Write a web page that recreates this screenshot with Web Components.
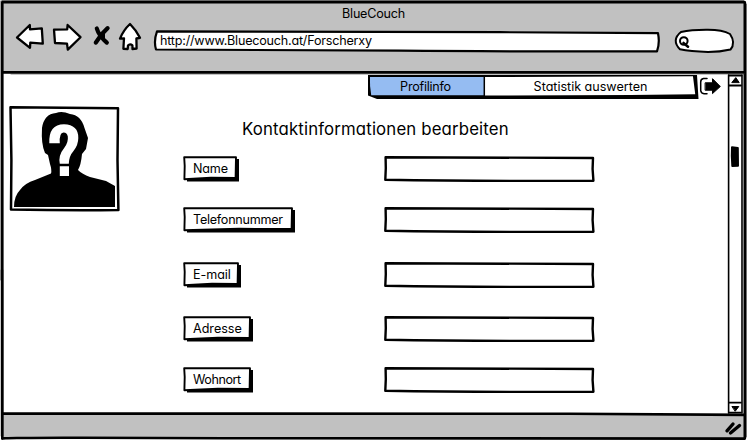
<!DOCTYPE html>
<html lang="de"><head><meta charset="utf-8"><title>BlueCouch</title>
<style>html,body{margin:0;background:#fff;overflow:hidden}body{font:12.6px Inter,"Open Sans",sans-serif;font-feature-settings:"cv11","ss03";color:#000;width:747px;height:441px}</style></head>
<body>
<browser-window>
  <fit-text slot="title" width="62">BlueCouch</fit-text>
  <fit-text slot="url" width="211">http://www.Bluecouch.at/Forscherxy</fit-text>
  <profile-page></profile-page>
</browser-window>
<script>
const base = '<style>*{box-sizing:border-box}svg{display:block;overflow:visible;fill:none;stroke:#000;stroke-width:2.4;stroke-linejoin:round;stroke-linecap:round}</style>';
function define(name, html, init) {
  customElements.define(name, class extends HTMLElement {
    connectedCallback() {
      if (this.shadowRoot) return;
      this.attachShadow({mode: 'open'}).innerHTML = base + (typeof html === 'function' ? html(this) : html);
      if (init) init(this);
    }
  });
}

/* Text whose letter spacing is tuned to a given ink width. */
define('fit-text', '<style>:host{display:inline-block;white-space:nowrap;line-height:16px;padding-top:1px}</style><span><slot></slot></span>', el => {
  const s = el.shadowRoot.querySelector('span');
  const w = +el.getAttribute('width') + .8;
  const n = el.textContent.length;
  s.style.letterSpacing = ((w - s.getBoundingClientRect().width) / n) + 'px';
});

define('nav-icons', `<style>:host{display:block;width:126px;height:28px}svg{fill:#fff;stroke-width:2.3}</style>
<svg width="126" height="28" viewBox="16 23 126 28">
<path d="M17 37.5 29.8 25 30 29.4 41.8 28.3 42.8 43.6 30.3 42.6 30 47.8Z"/>
<path d="M54 29.6 67.2 29.4 67.6 25 80.5 37.2 67.8 49.6 67 43.7 55 43Z"/>
<path d="M96.8 28.5Q99 36 106.8 42.6M107.6 28.2Q101 34 95.8 42.6" stroke-width="4.2" fill="none"/><path d="M99 33.5 105 31.5 105 38.5 99.5 38.5Z" fill="#000" stroke="none"/>
<path d="M130 24 Q136 30 140 37.8L136.4 38.5 136.6 48.5 132.5 49 132.4 45.4Q130 43.3 128 45.6L127.7 49 123.4 48.8 124 38.3 120 38.6Q123.5 30 130 24Z"/>
</svg>`);

define('url-field', `<style>:host{display:grid;width:506px;height:22px}svg,div{grid-area:1/1}div{padding:2px 0 0 6px}svg{fill:#fff;stroke-width:2.2}</style>
<svg width="506" height="22" viewBox="154 30 506 22"><path d="M157 31.4 Q400 31.5 500 32.2T658 33.2 Q660 43 657 51.4 Q500 51.6 400 50.7 T156 49.5 Q153.5 41 157 31.4Z"/></svg><div><slot></slot></div>`);

define('search-field', `<style>:host{display:block;width:60px;height:25px}svg{fill:#fff;stroke-width:2}</style>
<svg width="60" height="25" viewBox="675 29 60 25"><path d="M681 32Q691 29.8 706 29.8 Q722 29.5 730 34 Q736 43 730.5 49.5 Q720 52 708 52 Q690 51.5 680 49.3 Q671 40 681 32Z"/><circle cx="683.8" cy="41" r="3.8"/><path d="M683.5 43 688 46.7" stroke-width="2.6"/></svg>`);

define('browser-window', `<style>
:host{display:grid;grid-template:73px 341px 27px/747px;width:747px;height:441px}
.back{grid-area:1/1/4/2}header{grid-area:1/1;display:grid;grid-template-rows:23px 1fr;z-index:1}
.title{display:flex;justify-content:center;padding-top:5px}
.bar{display:flex;padding-left:16px}nav-icons{margin-right:12px}url-field{margin:7px 15px 0 0}search-field{margin-top:6px}
main{grid-area:2/1;z-index:1}footer{grid-area:3/1;z-index:1;display:flex;justify-content:flex-end;padding:7px 4px 0 0}
</style>
<svg class="back" width="747" height="441"><path fill="#fff" stroke="none" d="M0 0H747V441H0Z"/><path fill="#c1c1c1" stroke="none" d="M3 3H744V72H3ZM3 414H744V438H3Z"/>
<path stroke="#444" stroke-width="1" d="M2 .7H744M1 1V280M746.2 4V437"/>
<path stroke-width="2.6" d="M2.5 2.3H744.8V438.6Q500 439.4 250 438.2T2.3 438.6V2.3M3 72.4Q180 72 744 72.4M3 413.4Q400 412.8 570 413.8T744 414.9"/><path d="M11 73.8H744" stroke="#333" stroke-width="1"/><path d="M2 270V436"/></svg>
<header><div class="title"><slot name="title"></slot></div><div class="bar"><nav-icons></nav-icons><url-field><slot name="url"></slot></url-field><search-field></search-field></div></header>
<main><slot></slot></main>
<footer><svg width="18" height="15" viewBox="725 421 18 15" style="stroke-width:3.4"><path d="M727 430.8 733 424M730.5 433 739.5 425.5"/></svg></footer>`);

define('tab-bar', `<style>:host{display:grid;width:331px;height:25px}svg,nav{grid-area:1/1}nav{display:grid;grid-template-columns:115px 1fr;padding-top:3px}nav span{display:flex;justify-content:center}nav span+span{padding-right:1px}</style>
<svg width="331" height="25" viewBox="368 75 331 25"><path fill="#000" stroke="none" d="M368 75H697L698.5 99H500L377 99 368 95.5Z"/><path fill="#fff" stroke="none" d="M484 77 693 76.3 695.2 94.2 630 95 484 95.5Z"/><path fill="#95bcf2" stroke="none" d="M370 77H484V95.3H371.2Q369.5 86 370 77Z"/><path d="M484.3 76V97" stroke-width="1.5"/></svg>
<nav><span><fit-text width="50">Profilinfo</fit-text></span><span><fit-text width="113">Statistik auswerten</fit-text></span></nav>`);

define('logout-icon', `<style>:host{display:block;width:22px;height:18px}</style><svg width="22" height="18" viewBox="699 77 22 18"><path stroke-width="1.5" d="M707 78.5H703.5Q700.7 79 700.7 82V90.5Q701 93.5 704 93.8H707"/><path fill="#000" stroke-width="1" d="M705.5 82.8H712.5V78.7L720.3 86.5 712.5 93.6V90.2H705.5Z"/></svg>`);

define('scroll-bar', `<style>:host{display:block;width:15px;height:340px}</style><svg width="15" height="340" viewBox="728 74 15 340"><path d="M728.6 75V413" stroke-width="1.6"/><path d="M742 75V413" stroke-width="1.6"/><path stroke-width="1.8" d="M729 75.5H741.5M729 85.5H741M729 402.6H741M729 412.7H741"/><path fill="#000" stroke-width="1" d="M732 82.3 735.8 77.6 739 82.3ZM732.3 406.5H738.8L735.4 411Z"/><path fill="#000" stroke-width="2" d="M732 147.2 737.8 148 738 165.8 732.3 166 731.8 156Z"/></svg>`);

define('profile-avatar', `<style>:host{display:block;width:111px;height:106px}</style><svg width="111" height="106" viewBox="9 106 111 106"><path fill="#fff" stroke-width="2.5" d="M10.5 107.2Q60 107.7 118 108.3L117.5 160 118.4 210Q65 210.6 11 209.4L11.4 160Z"/>
<path fill="#000" stroke="none" d="M14 207Q14 196 20 190Q25 183 35 180L51 173.5Q52 170 50 164L48 155 45 153Q41 144 42 128Q44 114 56 113Q62 110.5 70 114Q81 115 84.5 128L88 138 86 149 82 154Q81 165 78 170Q82 174 90 177L106 181 115 186V207Z"/>
<path fill="#fff" stroke="none" d="M49.3 143.3Q48.5 124.3 64 124.3Q78.5 124.8 78.3 138Q78.3 145 73.5 151Q69 156 68.8 163.8H59.8Q58 155.5 64.5 147.5Q68.5 142 67.8 136.5Q67 132.5 63.5 132.6Q59 133 59.8 143.3ZM59.8 166.2H69V176H59.8Z"/></svg>`);

define('sketch-label', el => { const w = +el.getAttribute('box'); return `<style>:host{display:grid;width:${w}px;height:26px}svg,div{grid-area:1/1}div{padding:3.5px 0 0 10px}</style>
<svg width="${w}" height="26" viewBox="0 0 ${w} 26"><path fill="#000" stroke="none" d="M4 3H${w}V25.6H4Z"/><path fill="#fff" stroke-width="1.9" d="M1.2 1.2 ${w-3} 1.2 ${w-3.4} 22 ${w*.5} 21.8 1.4 23.2 1.7 10Z"/></svg><div><slot></slot></div>`; });

define('sketch-input', `<style>:host{display:block;width:211px;height:26px}</style><svg width="211" height="26" viewBox="0 0 211 26"><path fill="#fff" d="M1.6 1.2Q70 1.6 209 2L208.6 13 209.4 24.7Q90 25.3 1.3 23.8L1.8 12Z"/></svg>`);

define('profile-page', `<style>
:host{display:grid;grid-template-columns:9px 111px 248px 331px 1fr 15px 4px;grid-template-rows:28px 312px;padding-top:1px;height:341px}
tab-bar{grid-area:1/4;margin-top:1px}logout-icon{grid-area:1/5;margin-top:3px}scroll-bar{grid-area:1/6/3/7}
profile-avatar{grid-area:2/2;margin-top:4px}
form{grid-area:2/3/3/5;padding:17px 0 0 63px}
h1{margin:0 0 17px 59px;height:20px;font-size:16.8px;font-weight:400;line-height:20px}h1 fit-text{line-height:20px;padding-top:0}
.fields{display:grid;grid-template-columns:201px 211px;grid-template-rows:51px 55px 54px 51px 26px}
</style>
<tab-bar></tab-bar><logout-icon></logout-icon><scroll-bar></scroll-bar><profile-avatar></profile-avatar>
<form><h1><fit-text width="266">Kontaktinformationen bearbeiten</fit-text></h1><div class="fields">
<sketch-label box="56"><fit-text width="34">Name</fit-text></sketch-label><sketch-input></sketch-input>
<sketch-label box="112"><fit-text width="89">Telefonnummer</fit-text></sketch-label><sketch-input></sketch-input>
<sketch-label box="58"><fit-text width="37">E-mail</fit-text></sketch-label><sketch-input></sketch-input>
<sketch-label box="70"><fit-text width="48">Adresse</fit-text></sketch-label><sketch-input></sketch-input>
<sketch-label box="70"><fit-text width="47">Wohnort</fit-text></sketch-label><sketch-input></sketch-input>
</div></form>`);
</script></body></html>
